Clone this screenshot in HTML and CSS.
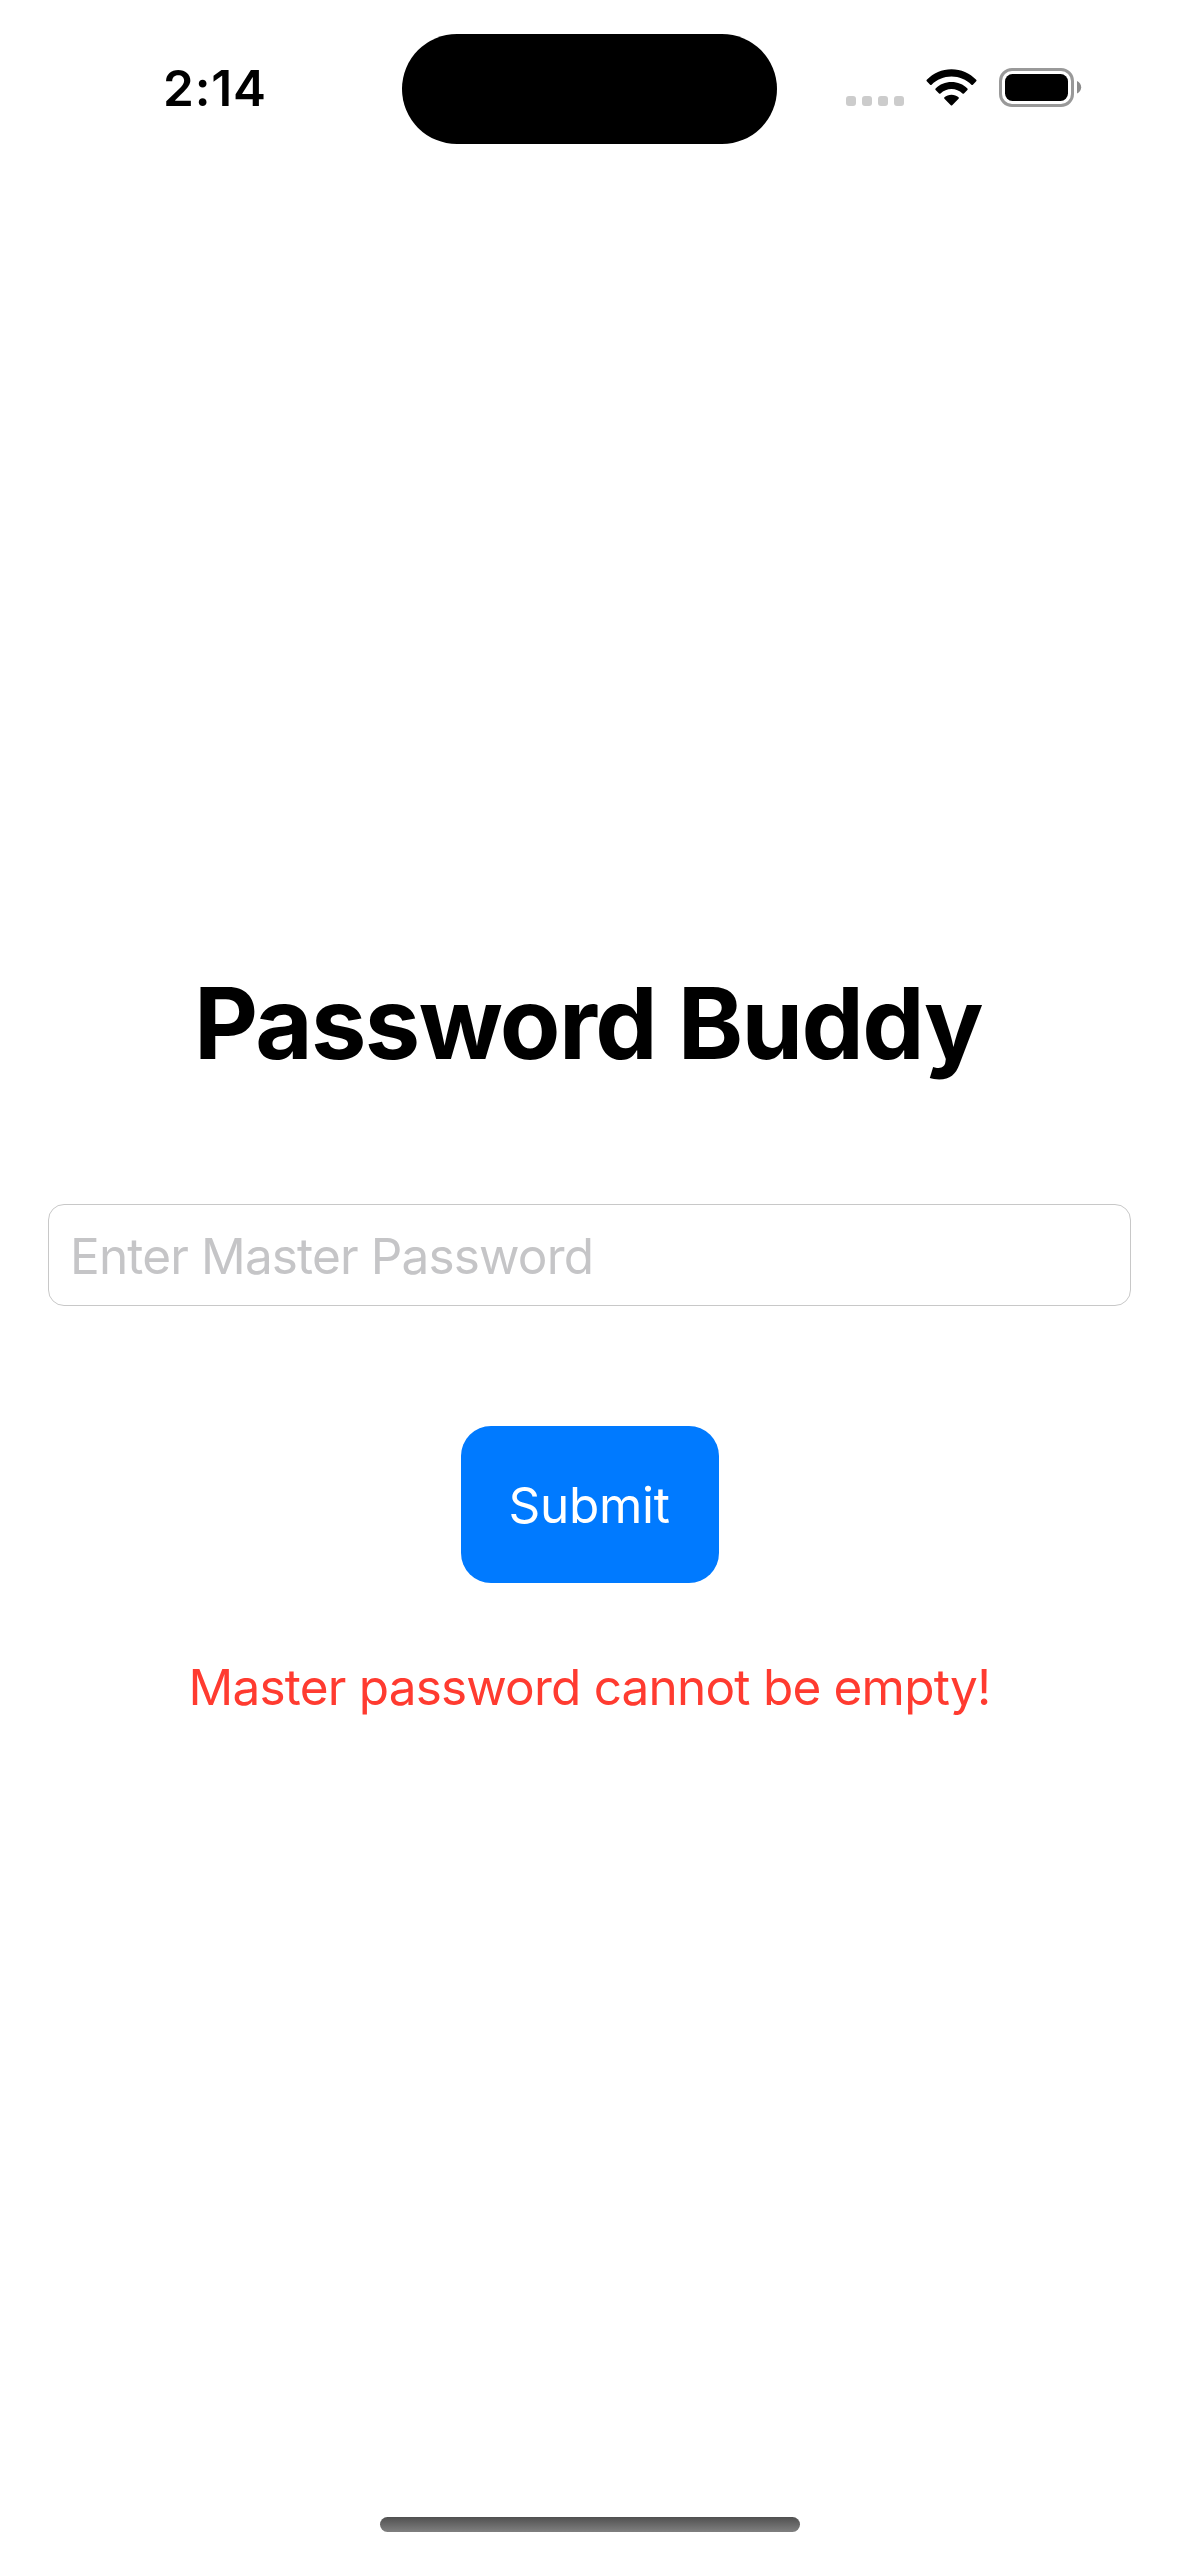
FILE: index.html
```html
<!DOCTYPE html>
<html lang="en">
<head>
<meta charset="utf-8">
<title>Password Buddy</title>
<link rel="stylesheet" href="styles.css">
</head>
<body>
<div class="screen">
  <header class="status-bar">
    <time class="clock">2:14</time>
    <div class="island"></div>
    <div class="indicators">
      <svg class="signal" viewBox="0 0 58 10" aria-hidden="true">
        <rect width="10" height="10" rx="3"/>
        <rect x="16" width="10" height="10" rx="3"/>
        <rect x="32" width="10" height="10" rx="3"/>
        <rect x="48" width="10" height="10" rx="3"/>
      </svg>
      <svg class="wifi" viewBox="0 0 52 38" aria-hidden="true">
        <path d="M.8 10.7C7.5 3.9 16.2 0 26 0s18.500 3.900 25.200 10.700c.5.500.5 1 0 1.500l-3.400 3.400c-.5.500-1 .5-1.500 0C40.800 10.200 33.900 7.200 26 7.200s-14.800 3-20.300 8.400c-.5.500-1 .5-1.500 0L.8 12.200c-.5-.5-.5-1 0-1.500z"/>
        <path d="M9.800 19.600C14 15.400 19.700 13 26 13s12 2.400 16.200 6.600c.5.500.5 1 0 1.500l-3.500 3.400c-.5.500-1 .5-1.500 0C34.100 21.700 30.200 20.100 26 20.100s-8.100 1.600-11.200 4.400c-.5.500-1 .5-1.500 0l-3.500-3.400c-.5-.5-.5-1 0-1.500z"/>
        <path d="M18.800 28.500C20.700 26.900 23.200 26 26 26s5.300.9 7.200 2.500c.5.500.5 1 0 1.500l-6.500 6.500c-.5.500-.9.500-1.400 0L18.800 30c-.5-.5-.5-1 0-1.500z"/>
      </svg>
      <svg class="battery" viewBox="0 0 83 39" aria-hidden="true">
        <rect class="battery-shell" x="1.500" y="1.500" width="72" height="36" rx="11.500"/>
        <rect x="6" y="6" width="63" height="27" rx="7.500"/>
        <path class="battery-tip" d="M78 13v12.500c2.500-1 4.200-3.500 4.200-6.250S80.500 14 78 13z"/>
      </svg>
    </div>
  </header>
  <main class="login">
    <h1 class="title">Password Buddy</h1>
    <input class="field" type="password" placeholder="Enter Master Password">
    <button class="submit" type="button">Submit</button>
    <p class="error">Master password cannot be empty!</p>
  </main>
  <footer class="home-area"><div class="home-indicator"></div></footer>
</div>
</body>
</html>
```
FILE: styles.css
```css
* {
  box-sizing: border-box;
}

body {
  margin: 0;
  background: #fff;
  color: #000;
  font-family: Inter, "Liberation Sans", sans-serif;
  font-size: 49.5px;
}

.screen {
  display: flex;
  flex-direction: column;
  width: 1179px;
  height: 2556px;
  overflow: hidden;
}

.status-bar {
  display: grid;
  grid-template-columns: 402px 375px 1fr;
  height: 177px;
  padding-top: 34px;
}

.clock {
  padding-left: 163px;
  font-weight: 600;
  line-height: 108px;
  letter-spacing: 0.8px;
}

.island {
  height: 110px;
  border-radius: 55px;
  background: #000;
}

.indicators {
  display: flex;
  align-items: flex-end;
  height: 73px;
  padding-left: 69px;
}

.signal {
  width: 58px;
  height: 10px;
  margin-bottom: 1px;
  fill: #ccc;
}

.wifi {
  width: 51px;
  height: 38px;
  margin-left: 22px;
}

.battery {
  width: 83px;
  height: 39px;
  margin-left: 22px;
}

.battery-shell {
  fill: none;
  stroke: #999;
  stroke-width: 3;
}

.battery-tip {
  fill: #8c8c8c;
}

.login {
  display: flex;
  flex: 1;
  flex-direction: column;
  align-items: center;
  padding: 786px 48px 0;
}

.title {
  margin: 0;
  padding-right: 3px;
  font-size: 99px;
  font-weight: 700;
  line-height: 120px;
  letter-spacing: -1.65px;
  white-space: nowrap;
}

.field {
  width: 1083px;
  height: 102px;
  margin-top: 121px;
  padding: 1px 20px 0 21px;
  border: 1px solid #c8c8c8;
  border-radius: 16px;
  outline: 0;
  background: #fff;
  font: inherit;
  letter-spacing: -0.85px;
}

.field::placeholder {
  color: #c5c5c7;
  opacity: 1;
}

.submit {
  width: 258px;
  height: 157px;
  margin-top: 120px;
  padding: 0 1px 0 0;
  border: 0;
  border-radius: 30px;
  background: #007aff;
  color: #fff;
  font: inherit;
  letter-spacing: -0.3px;
}

.error {
  margin: 74px 0 0;
  color: #ff3b30;
  line-height: 60px;
  letter-spacing: -0.8px;
  white-space: nowrap;
}

.home-area {
  display: flex;
  justify-content: center;
  height: 39px;
}

.home-indicator {
  width: 420px;
  height: 15px;
  border-radius: 7.5px;
  background: linear-gradient(#505050, #808080);
}
```
